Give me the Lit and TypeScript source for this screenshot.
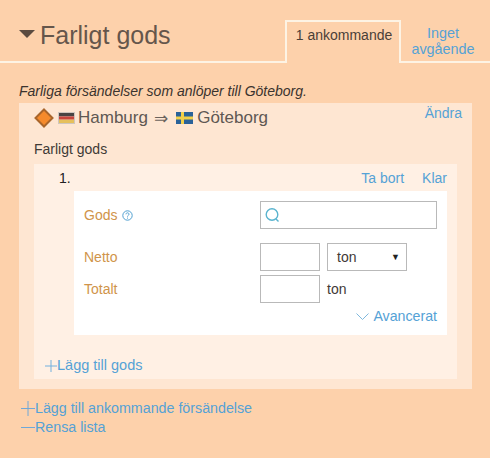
import { LitElement, html, css } from "lit";
import { customElement } from "lit/decorators.js";

@customElement("app-root")
export class AppRoot extends LitElement {
  static styles = css`
    :host {
      display: block;
      width: 490px;
      height: 458px;
      background: #fdd1ab;
      font-family: "Liberation Sans", Arial, sans-serif;
      font-size: 14px;
      color: #3f3a36;
      overflow: hidden;
    }
    a { color: #55a2d6; text-decoration: none; }
    .head {
      display: flex;
      align-items: flex-end;
      height: 63px;
    }
    .title-wrap {
      width: 285px;
      height: 63px;
      box-sizing: border-box;
      border-bottom: 2px solid #fdf3e4;
      padding: 20px 0 0 19px;
      display: flex;
      align-items: flex-start;
      gap: 5px;
    }
    .caret { margin-top: 10px; display: block; }
    h1 {
      margin: 0;
      font-size: 25px;
      font-weight: normal;
      line-height: 30px;
      color: #65564b;
    }
    .tab {
      width: 116px;
      height: 43px;
      box-sizing: border-box;
      border: 2px solid #fdf3e4;
      border-bottom: none;
      text-align: center;
      padding: 4px 0 0 2px;
      line-height: 18px;
      color: #4a4038;
      font-size: 14px;
    }
    .tab2 {
      flex: 1;
      height: 43px;
      box-sizing: border-box;
      border-bottom: 2px solid #fdf3e4;
      text-align: center;
      padding: 5px 5px 0 0;
      line-height: 16px;
      font-size: 14.4px;
    }
    .intro {
      margin: 20px 0 0 19px;
      font-style: italic;
      line-height: 17px;
      color: #3a332e;
      font-size: 14px;
    }
    .panel {
      margin: 3px 18px 0 19px;
      height: 286px;
      box-sizing: border-box;
      background: #fee6d2;
      padding: 0 15px;
    }
    .route {
      display: flex;
      align-items: center;
      height: 30px;
      font-size: 17px;
      color: #5f5853;
    }
    .diamond { margin-right: 4px; display: block; }
    .flag { margin-right: 4px; display: block; }
    .city { margin-left: -1px; }
    .arrow { margin: 0 8px 0 6px; font-family: "DejaVu Sans", sans-serif; font-size: 17px; color: #6a625c; }
    .change { margin-left: auto; margin-right: -5px; margin-top: -10px; font-size: 14px; }
    .sub { margin-top: 8px; line-height: 17px; font-size: 14px; color: #3f3a36; }
    .item {
      margin-top: 6px;
      height: 215px;
      background: #fff0e4;
      padding: 0 10px 0 25px;
      box-sizing: border-box;
    }
    .item-top {
      display: flex;
      height: 27px;
      align-items: center;
      justify-content: space-between;
      font-size: 14px;
      color: #222;
    }
    .actions { display: flex; gap: 18px; }
    .form {
      margin-left: 15px;
      height: 144px;
      background: #fff;
      box-sizing: border-box;
      padding: 10px 10px 0 10px;
    }
    .grid {
      display: grid;
      grid-template-columns: 176px 1fr;
      row-gap: 4px;
      align-items: center;
    }
    .lbl { color: #d0944a; font-size: 14px; display: flex; align-items: center; gap: 5px; }
    .ctl { display: flex; align-items: center; gap: 7px; font-size: 14px; color: #3f3a36; }
    .box {
      height: 28px;
      box-sizing: border-box;
      border: 1px solid #b9b9b9;
      background: #fff;
    }
    .search { width: 177px; display: flex; align-items: center; padding-left: 4px; margin-bottom: 10px; }
    .lblg { margin-bottom: 10px; }
    .num { width: 60px; }
    .select {
      width: 80px;
      display: flex;
      align-items: center;
      justify-content: space-between;
      padding: 0 6px 0 9px;
    }
    .sel-arrow { font-size: 9px; color: #222; }
    .adv {
      display: flex;
      justify-content: flex-end;
      align-items: center;
      gap: 4px;
      margin-top: 5px;
      font-size: 14.2px;
      line-height: 17px;
    }
    .add { display: flex; align-items: center; font-size: 14.5px; margin: 22px 0 0 -14px; line-height: 17px; }
    .links { margin: 10px 0 0 21px; font-size: 14.25px; line-height: 19px; }
    .links a { display: flex; align-items: center; }
    svg { display: block; flex: none; }
  `;

  render() {
    const germany = html`<svg class="flag" width="17" height="12" viewBox="0 0 17 12">
      <rect x=".5" y=".5" width="16" height="11" fill="#fff" stroke="#cfc6be"/>
      <rect x="1" y="1" width="15" height="3.4" fill="#4a4442"/>
      <rect x="1" y="4.4" width="15" height="3.3" fill="#c8453b"/>
      <rect x="1" y="7.7" width="15" height="3.3" fill="#e6c05c"/></svg>`;
    const sweden = html`<svg class="flag" width="17" height="12" viewBox="0 0 17 12">
      <rect width="17" height="12" fill="#2a6299"/>
      <rect x="5" width="3" height="12" fill="#f2d04a"/>
      <rect y="4.5" width="17" height="3" fill="#f2d04a"/></svg>`;
    return html`
      <div class="head">
        <div class="title-wrap">
          <svg class="caret" width="16" height="8" viewBox="0 0 16 8"><path d="M0 0h16L8 8z" fill="#5b4b40"/></svg>
          <h1>Farligt gods</h1>
        </div>
        <div class="tab">1 ankommande</div>
        <a class="tab2" href="#">Inget<br />avgående</a>
      </div>
      <p class="intro">Farliga försändelser som anlöper till Göteborg.</p>
      <div class="panel">
        <div class="route">
          <svg class="diamond" width="20" height="20" viewBox="0 0 20 20">
            <path d="M10 1.5 18.5 10 10 18.5 1.5 10z" fill="#f58a2c" stroke="#a9652b" stroke-width="2"/>
          </svg>
          ${germany}<span class="city">Hamburg</span><span class="arrow">⇒</span>${sweden}<span>Göteborg</span>
          <a class="change" href="#">Ändra</a>
        </div>
        <div class="sub">Farligt gods</div>
        <div class="item">
          <div class="item-top">
            <span>1.</span>
            <span class="actions"><a href="#">Ta bort</a><a href="#">Klar</a></span>
          </div>
          <div class="form">
            <div class="grid">
              <div class="lbl lblg">Gods
                <svg width="11" height="11" viewBox="0 0 11 11" fill="none" stroke="#4f9fd0">
                  <circle cx="5.5" cy="5.5" r="4.7"/>
                  <path d="M4 4.3c0-2 3-2 3 0 0 1-1.5 1-1.5 2.3M5.5 7.6v1"/>
                </svg>
              </div>
              <div class="ctl"><div class="box search">
                <svg width="16" height="17" viewBox="0 0 16 17" fill="none" stroke="#5ab4cf" stroke-width="1.4">
                  <circle cx="7" cy="7.5" r="5.8"/><path d="M11 12l2.5 2.5"/>
                </svg>
              </div></div>
              <div class="lbl">Netto</div>
              <div class="ctl">
                <div class="box num"></div>
                <div class="box select"><span>ton</span><span class="sel-arrow">▼</span></div>
              </div>
              <div class="lbl">Totalt</div>
              <div class="ctl"><div class="box num"></div><span>ton</span></div>
            </div>
            <div class="adv">
              <svg width="13" height="7" viewBox="0 0 13 7" fill="none" stroke="#7fb8dd"><path d="M.5.5l6 6 6-6"/></svg>
              <a href="#">Avancerat</a>
            </div>
          </div>
          <a class="add" href="#">
            <svg width="12" height="12" viewBox="0 0 12 12" stroke="#72b0de"><path d="M6 0v12M0 6h12"/></svg>Lägg till gods
          </a>
        </div>
      </div>
      <div class="links">
        <a href="#"><svg width="14" height="15" viewBox="0 0 14 15" stroke="#6fa8d8"><path d="M7 0v15M0 7.5h14"/></svg>Lägg till ankommande försändelse</a>
        <a href="#"><svg width="14" height="15" viewBox="0 0 14 15" stroke="#6fa8d8"><path d="M0 7.5h14"/></svg>Rensa lista</a>
      </div>
    `;
  }
}
